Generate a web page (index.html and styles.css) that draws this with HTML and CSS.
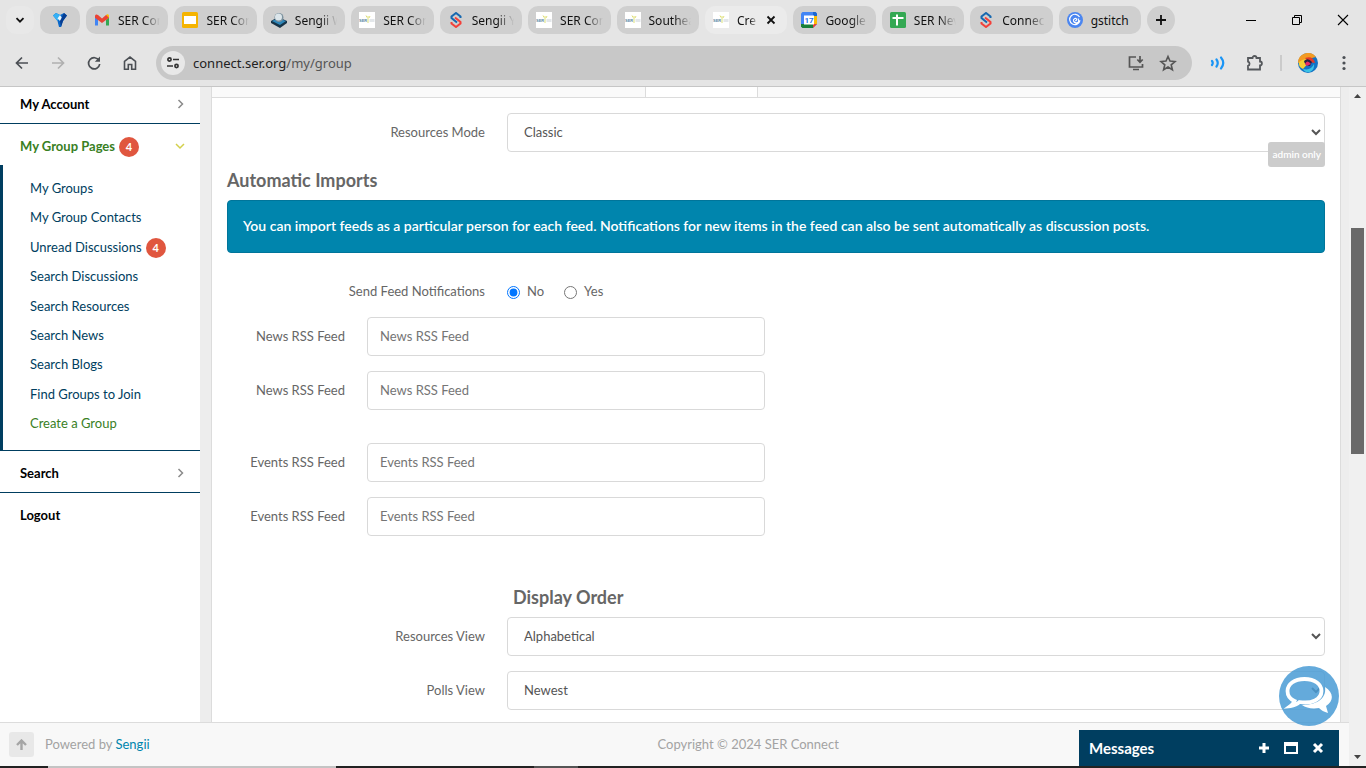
FILE: index.html
```html
<!DOCTYPE html>
<html lang="en">
<head>
<meta charset="utf-8">
<title>Create a Group</title>
<link rel="stylesheet" href="styles.css">
</head>
<body>
<svg class="defs" aria-hidden="true">
  <symbol id="ser" viewBox="0 0 16 16"><rect width="16" height="16" fill="#fff"/><text x="0" y="10" font-family="Liberation Sans, sans-serif" font-weight="700" font-size="4" fill="#5c87a3">SER</text><path d="M9 4v7M7 3.500l1 2M11 4l-1 2" stroke="#dfe07a" stroke-width="1"/><path d="M10.500 8.500h5" stroke="#e3e7ea" stroke-width="3"/></symbol>
  <symbol id="sengii" viewBox="0 0 16 16"><path d="M12.500 6V4.500L8 1 3.500 4.500V6L9 10.500" fill="none" stroke="#1668b0" stroke-width="2"/><path d="M7 5.500 12.500 10v1.500L8 15l-4.500-3.500V10" fill="none" stroke="#f3403a" stroke-width="2"/></symbol>
</svg>
<header class="browser">
  <div class="tabstrip">
    <button class="tab-search" aria-label="Search tabs"><svg width="10" height="10" viewBox="0 0 10 10"><path d="M1.500 3.200 5 6.700 8.500 3.200" fill="none" stroke="#111" stroke-width="1.800"/></svg></button>
    <div class="tabs">
      <button class="tab pinned" aria-label="Pinned tab"><svg width="16" height="16" viewBox="0 0 16 16"><path d="M1 3.500 4 1l4 2 4-2 3 2.500-4 5.500-2 6H7L5.500 9z" fill="#0a67c8"/><path d="M1 3.500 4 1l4 2-2.500 6z" fill="#35b1f5"/><path d="M8 3 5.500 6.500 8 9l2.500-2.500z" fill="#e8f8ff"/><path d="M11 9 15 3.500 12 1 8 9l1 6z" fill="#073d91"/></svg></button>
      <button class="tab"><svg width="16" height="16" viewBox="0 0 16 16"><path d="M1 4v9.500h3V7z" fill="#4285f4"/><path d="M12 7v6.500h3V4z" fill="#34a853"/><path d="M12 4.500V8l3-2.300V4c0-1.600-1.700-2.200-3-1z" fill="#fbbc04"/><path d="M1 5.700 8 11l7-5.300-3-2.700L8 6.500 4 3C2.700 2 1 2.500 1 4z" fill="#ea4335"/></svg><span>SER Con</span></button>
      <button class="tab"><svg width="16" height="16" viewBox="0 0 16 16"><rect width="16" height="16" rx="1.500" fill="#f5b400"/><rect x="2" y="4" width="12" height="8" fill="#fff"/></svg><span>SER Con</span></button>
      <button class="tab"><svg width="16" height="16" viewBox="0 0 16 16"><path d="M0 9 7 5l9 4v2l-7 5-9-5z" fill="#173448"/><path d="M1 9l6-3 8 3-6 4z" fill="#2e86b8"/><circle cx="8" cy="5.500" r="4.500" fill="#7d929e"/><circle cx="7.500" cy="5" r="3.500" fill="#dce6eb"/></svg><span>Sengii W</span></button>
      <button class="tab"><svg width="16" height="16"><use href="#ser"/></svg><span>SER Con</span></button>
      <button class="tab"><svg width="16" height="16"><use href="#sengii"/></svg><span>Sengii Y</span></button>
      <button class="tab"><svg width="16" height="16"><use href="#ser"/></svg><span>SER Con</span></button>
      <button class="tab"><svg width="16" height="16"><use href="#ser"/></svg><span>Southea</span></button>
      <button class="tab active"><svg width="16" height="16"><use href="#ser"/></svg><span>Cre</span><svg class="close" width="10" height="10" viewBox="0 0 10 10"><path d="m1.500 1.500 7 7m0-7-7 7" stroke="#111" stroke-width="1.800"/></svg></button>
      <button class="tab"><svg width="16" height="16" viewBox="0 0 16 16"><path d="M1.500 0h13L16 1.500V12l-4 4H1.500L0 14.500v-13z" fill="#4285f4"/><path d="M12 4h4v8h-4z" fill="#fbbc04"/><path d="M4 12h8v4H1.500L0 14.500V12z" fill="#188038"/><path d="M12 12h4l-4 4z" fill="#ea4335"/><path d="M12 0h2.500L16 1.500V4h-4z" fill="#1967d2"/><rect x="3" y="3.500" width="10" height="9" fill="#fff"/><text x="8" y="11.300" text-anchor="middle" font-family="Roboto, sans-serif" font-weight="700" font-size="8" fill="#1a73e8">17</text></svg><span>Google</span></button>
      <button class="tab"><svg width="16" height="16" viewBox="0 0 16 16"><rect width="16" height="16" rx="1.500" fill="#34a853"/><path d="M2.500 6h11M7 2.500v11" stroke="#fff" stroke-width="2"/></svg><span>SER Nev</span></button>
      <button class="tab"><svg width="16" height="16"><use href="#sengii"/></svg><span>Connec</span></button>
      <button class="tab"><svg width="16" height="16" viewBox="0 0 16 16"><circle cx="8" cy="8" r="8" fill="#4b86f0"/><path d="M12.500 5A5.200 5.200 0 1 0 13 8.500c-.8 2.500-5.500 3.500-6.500.5C6 7 8.500 5.500 9.500 7c.5 1-.5 2-1.500 1.700M11 6.500c1.500 2 .5 5-2.500 5.500" fill="none" stroke="#fff" stroke-width="1.200"/></svg><span class="full">gstitch</span></button>
      <button class="newtab" aria-label="New tab"><svg width="12" height="12" viewBox="0 0 12 12"><path d="M6 1v10M1 6h10" stroke="#111" stroke-width="1.800"/></svg></button>
    </div>
    <div class="window-buttons">
      <button aria-label="Minimise"><svg width="12" height="12" viewBox="0 0 12 12"><path d="M1 6.500h10" stroke="#000"/></svg></button>
      <button aria-label="Restore"><svg width="12" height="12" viewBox="0 0 12 12"><path d="M1.500 3.500h7v7h-7zM3.500 3.500v-2h7v7h-2" fill="none" stroke="#000"/></svg></button>
      <button aria-label="Close"><svg width="12" height="12" viewBox="0 0 12 12"><path d="m1 1 10 10M11 1 1 11" stroke="#000" stroke-width="1.100"/></svg></button>
    </div>
  </div>
  <div class="toolbar">
    <div class="nav">
      <button aria-label="Back"><svg width="16" height="16" viewBox="0 0 16 16"><path d="M14 8H3M8 2.500 2.500 8 8 13.500" fill="none" stroke="#4b4f54" stroke-width="1.700"/></svg></button>
      <button aria-label="Forward"><svg width="16" height="16" viewBox="0 0 16 16"><path d="M2 8h11M8 2.500 13.500 8 8 13.500" fill="none" stroke="#b0b0b0" stroke-width="1.700"/></svg></button>
      <button aria-label="Reload"><svg width="16" height="16" viewBox="0 0 16 16"><path d="M13 5.500A5.600 5.600 0 1 0 13.700 9" fill="none" stroke="#4b4f54" stroke-width="1.700"/><path d="M14 1.500v5.300H8.800z" fill="#4b4f54"/></svg></button>
      <button aria-label="Home"><svg width="16" height="16" viewBox="0 0 16 16"><path d="M2.500 6.300 8 2l5.500 4.300v8H9.700V9.500H6.300v4.800H2.500z" fill="none" stroke="#4b4f54" stroke-width="1.600"/></svg></button>
    </div>
    <div class="address">
      <button class="site" aria-label="Site information"><svg width="14" height="14" viewBox="0 0 14 14"><g fill="none" stroke="#333" stroke-width="1.700"><circle cx="3.500" cy="3.500" r="1.600"/><path d="M7 3.500h6M1 10h6"/><circle cx="10.500" cy="10" r="1.600"/></g></svg></button>
      <span class="url">connect.ser.org<span>/my/group</span></span>
      <button aria-label="Install"><svg width="18" height="18" viewBox="0 0 18 18"><path d="M9 3H2.500v10h13v-3M13 2v6m-2.700-2.500L13 8.200l2.700-2.700M6 15.500h6" fill="none" stroke="#555" stroke-width="1.700"/></svg></button>
      <button aria-label="Bookmark"><svg width="18" height="18" viewBox="0 0 18 18"><path d="m9 2.500 2 4.500 5 .5-3.800 3.300 1.200 4.900L9 13l-4.400 2.700 1.200-4.900L2 7.500 7 7z" fill="none" stroke="#555" stroke-width="1.600"/></svg></button>
    </div>
    <div class="extensions">
      <button aria-label="Read aloud"><svg width="16" height="16" viewBox="0 0 16 16"><path d="M2 6q1.500 2 0 4M6.500 4.500q2.500 3.500 0 7M11 2.500q4.500 5.500 0 11" fill="none" stroke="#1b95f5" stroke-width="2.200" stroke-linecap="round"/></svg></button>
      <button aria-label="Extensions"><svg width="18" height="18" viewBox="0 0 18 18"><path d="M3 4h4.500a2 2 0 0 1 4 0H15v3.500a1.900 1.900 0 0 1 0 3.800V15.500H3v-3.700a2.200 2.200 0 0 0 0-4.200z" fill="none" stroke="#55585c" stroke-width="1.800"/></svg></button>
      <i class="divider"></i>
      <button aria-label="Profile"><svg width="20" height="20" viewBox="0 0 20 20"><circle cx="10" cy="10" r="10" fill="#1272c4"/><path d="M0 10A10 10 0 0 1 18 4L10 6z" fill="#f39a21"/><path d="M1 9q6-5 11-1l-7 8Q0 14 1 9" fill="#f3cf35"/><path d="M7 5q8-3 10 5l-6-1z" fill="#e23a28"/><path d="M6 8q4-4 8 1l-2 4q-5 0-6-5" fill="#222348"/><path d="M7 11q2-5 6 0l-4 2z" fill="#e62a69"/><path d="M5 16q8 2 11-5 1 5-4 8-5 1-7-3" fill="#3ac2e5"/></svg></button>
      <button aria-label="Menu"><svg width="16" height="16" viewBox="0 0 16 16" fill="#4b4f54"><circle cx="8" cy="2.500" r="1.600"/><circle cx="8" cy="8" r="1.600"/><circle cx="8" cy="13.500" r="1.600"/></svg></button>
    </div>
  </div>
</header>

<div class="viewport">
  <div class="page">
    <div class="columns">
      <nav class="sidebar">
        <a class="item first" href="#">My Account<svg width="8" height="12" viewBox="0 0 8 12"><path d="m1.500 2 4 4-4 4" fill="none" stroke="#8a8a8a" stroke-width="1.500"/></svg></a>
        <a class="item open" href="#">My Group Pages<span class="count">4</span><svg width="10" height="12" viewBox="0 0 10 12"><path d="m1 4 4 4 4-4" fill="none" stroke="#d3d04b" stroke-width="1.500"/></svg></a>
        <div class="sub">
          <a href="#">My Groups</a>
          <a href="#">My Group Contacts</a>
          <a href="#">Unread Discussions<span class="count">4</span></a>
          <a href="#">Search Discussions</a>
          <a href="#">Search Resources</a>
          <a href="#">Search News</a>
          <a href="#">Search Blogs</a>
          <a href="#">Find Groups to Join</a>
          <a class="current" href="#">Create a Group</a>
        </div>
        <a class="item" href="#">Search<svg width="8" height="12" viewBox="0 0 8 12"><path d="m1.500 2 4 4-4 4" fill="none" stroke="#8a8a8a" stroke-width="1.500"/></svg></a>
        <a class="item last" href="#">Logout</a>
      </nav>
      <main class="content">
        <div class="section-tabs"><div class="section-active"></div></div>
        <form class="panel">
          <div class="row">
            <label for="mode">Resources Mode</label>
            <div class="control"><select id="mode"><option>Classic</option></select><span class="admin">admin only</span></div>
          </div>
          <h2>Automatic Imports</h2>
          <p class="alert">You can import feeds as a particular person for each feed. Notifications for new items in the feed can also be sent automatically as discussion posts.</p>
          <div class="row notify" role="radiogroup" aria-labelledby="notify">
            <span class="legend" id="notify">Send Feed Notifications</span>
            <div class="radios">
              <label><input type="radio" name="notify" checked>No</label>
              <label><input type="radio" name="notify">Yes</label>
            </div>
          </div>
          <div class="feeds">
            <div class="row"><label for="news1">News RSS Feed</label><input id="news1" type="text" placeholder="News RSS Feed"></div>
            <div class="row"><label for="news2">News RSS Feed</label><input id="news2" type="text" placeholder="News RSS Feed"></div>
          </div>
          <div class="feeds">
            <div class="row"><label for="events1">Events RSS Feed</label><input id="events1" type="text" placeholder="Events RSS Feed"></div>
            <div class="row"><label for="events2">Events RSS Feed</label><input id="events2" type="text" placeholder="Events RSS Feed"></div>
          </div>
          <h2 class="order">Display Order</h2>
          <div class="row"><label for="resources">Resources View</label><div class="control"><select id="resources"><option>Alphabetical</option></select></div></div>
          <div class="row"><label for="polls">Polls View</label><div class="control"><select id="polls"><option>Newest</option></select></div></div>
        </form>
      </main>
    </div>
    <footer class="footer">
      <button class="totop" aria-label="Back to top"><svg width="11" height="11" viewBox="0 0 11 11"><path d="M5.500 11V2M1 6l4.500-4.500L10 6" fill="none" stroke="#a5a5a5" stroke-width="2.400"/></svg></button>
      <span class="powered">Powered by <a href="#">Sengii</a></span>
      <span class="copyright">Copyright © 2024 SER Connect</span>
    </footer>
    <button class="chat" aria-label="Chat"><svg width="60" height="60" viewBox="0 0 60 60"><path d="M46 21c9 6 9 14 1 19l2 7c-4-1-7-3-9-5-7 1-13 0-17-3 12 0 25-5 23-18z" fill="#fff"/><path d="M25.500 13C15 13 8.500 18.500 8.500 25c0 4.500 2.500 8 7 10-1 2-2 3.500-4 5 4-.5 7-2 9-4 12 2 22-2.500 22-11 0-6.500-6.500-12-17-12z" fill="none" stroke="#fff" stroke-width="3.800"/></svg></button>
    <section class="messages">
      <strong>Messages</strong>
      <button aria-label="New message"><svg width="12" height="12" viewBox="0 0 12 12"><path d="M6 1v10M1 6h10" stroke="#fff" stroke-width="3"/></svg></button>
      <button aria-label="Open window"><svg width="14" height="12" viewBox="0 0 14 12"><path d="M1 1h12v10H1zM1 3h12" fill="none" stroke="#fff" stroke-width="2"/></svg></button>
      <button aria-label="Close messages"><svg width="12" height="12" viewBox="0 0 12 12"><path d="m2 2 8 8m0-8-8 8" stroke="#fff" stroke-width="3"/></svg></button>
    </section>
  </div>
  <div class="scrollbar">
    <svg width="9" height="6" viewBox="0 0 9 6"><path d="M1 5 4.500 1 8 5z" fill="#444"/></svg>
    <div class="track"><div class="thumb"></div></div>
    <svg width="9" height="6" viewBox="0 0 9 6"><path d="m1 1 3.500 4L8 1z" fill="#444"/></svg>
  </div>
</div>
<div class="taskbar"></div>
</body>
</html>
```
FILE: styles.css
```css
* { box-sizing: border-box; }
body {
  margin: 0;
  height: 100vh;
  display: flex;
  flex-direction: column;
  overflow: hidden;
  font: 13px/18px Lato, sans-serif;
  color: #666;
}
button {
  border: 0;
  padding: 0;
  background: none;
  color: inherit;
  font: inherit;
  display: flex;
  align-items: center;
  justify-content: center;
  flex: none;
}
a { color: #0085ad; text-decoration: none; }
svg { flex: none; }
.defs { position: absolute; width: 0; height: 0; }

.browser {
  flex: none;
  background: #e5e5e5;
  border-bottom: 1px solid #c6c6c6;
  font-family: "Noto Sans", "Open Sans", sans-serif;
  color: #111;
}
.tabstrip { display: flex; height: 40px; align-items: center; padding-left: 6px; }
.tab-search { width: 28px; height: 28px; margin-right: 6px; border-radius: 10px; background: #e8e8e8; }
.tabs { flex: 0 1 1135px; display: flex; gap: 6px; min-width: 0; }
.tab {
  flex: 1 1 0;
  min-width: 0;
  height: 28px;
  border-radius: 10px;
  background: #cfcfcf;
  padding: 0 8px;
  gap: 8px;
  justify-content: flex-start;
  font-size: 12px;
}
.tab span {
  flex: 1;
  min-width: 0;
  padding-top: 1px;
  overflow: hidden;
  white-space: nowrap;
  text-align: left;
  mask-image: linear-gradient(to right, #000 60%, transparent);
}
.tab .full { mask-image: none; }
.tab.pinned { flex: none; width: 40px; justify-content: center; }
.tab.active { background: #ebebeb; }
.tab .close { margin-right: 3px; }
.newtab { width: 28px; height: 28px; border-radius: 14px; background: #cfcfcf; }
.window-buttons { display: flex; margin-left: auto; }
.window-buttons button { width: 46px; height: 40px; }
.toolbar { display: flex; align-items: center; height: 46px; padding-bottom: 1px; }
.nav { display: flex; padding-left: 4px; margin-right: 8px; }
.nav button { width: 36px; height: 34px; }
.address {
  flex: 1;
  display: flex;
  align-items: center;
  height: 34px;
  border-radius: 17px;
  background: #c8c8c8;
  padding: 0 8px 0 5px;
}
.address button { width: 32px; height: 32px; }
.address .site { width: 24px; height: 24px; border-radius: 12px; background: #e8e8e8; }
.url { flex: 1; padding-left: 8px; font-size: 13px; color: #222; }
.url span { color: #555; }
.extensions { display: flex; align-items: center; padding: 0 4px 0 8px; }
.extensions button { width: 36px; height: 34px; }
.divider { width: 2px; height: 16px; margin: 0 8px; background: #cbcbcb; }

.viewport { flex: 1; min-height: 0; display: flex; }
.page { flex: 1; min-width: 0; position: relative; display: flex; flex-direction: column; }
.columns { flex: 1; min-height: 0; display: flex; overflow: hidden; background: #ededed; }
.sidebar { width: 200px; flex: none; background: #fff; }
.item {
  display: flex;
  align-items: center;
  padding: 13px 15px 10px 20px;
  border-bottom: 1px solid #003e60;
  font-weight: 700;
  color: #000;
}
.item svg { margin-left: auto; }
.item.first { padding-top: 8px; }
.item.open { border-bottom: 0; color: #39801f; }
.item.last { border-bottom: 0; }
.count {
  width: 20px;
  height: 20px;
  margin: 0 0 -2px 4px;
  border-radius: 10px;
  background: #e0563f;
  color: #fff;
  font-size: 11px;
  font-weight: 700;
  line-height: 20px;
  text-align: center;
}
.sub {
  min-height: 286px;
  padding: 9px 0 12px 27px;
  border-left: 3px solid #003e60;
  border-bottom: 1px solid #003e60;
  display: flex;
  flex-direction: column;
  justify-content: space-between;
  line-height: 29px;
}
.sub a { display: flex; align-items: center; color: #003e60; }
.sub .current { color: #39801f; }

.content { flex: 1; min-width: 0; padding: 0 8px 0 11px; }
.section-tabs {
  height: 11px;
  display: flex;
  background: #fafafa;
  border: 1px solid #dcdcdc;
  border-top: 0;
}
.section-active {
  width: 10%;
  margin-left: 38.4%;
  background: #fff;
  border: solid #dcdcdc;
  border-width: 0 1px;
}
.panel { background: #fff; border: solid #dcdcdc; border-width: 0 1px; padding: 15px 15px 40px; }
.row { display: flex; align-items: center; margin-bottom: 15px; }
.row > label { padding-bottom: 1px; }
.row > label, .legend { width: 258px; flex: none; margin-right: 22px; text-align: right; }
.control { flex: 1; position: relative; display: flex; }
select, input[type="text"] {
  flex: 1;
  width: 100%;
  min-width: 0;
  height: 39px;
  padding: 0 12px 1px;
  border: 1px solid #d9d9d9;
  border-radius: 4px;
  background: #fff;
  color: #555;
  font: inherit;
}
select { padding-right: 0; }
input::placeholder { color: #757575; }
.admin {
  position: absolute;
  right: 0;
  bottom: -15px;
  padding: 4px;
  border-radius: 3px;
  background: #ccc;
  color: #fff;
  font-size: 10px;
  line-height: 17px;
  font-weight: 600;
}
h2 { margin: 18px 0 10px; font-size: 18px; line-height: 20px; color: #666; }
.alert {
  margin: 0;
  padding: 15px 15px 17px;
  border: 1px solid #00759a;
  border-radius: 4px;
  background: #0085ad;
  color: #fff;
  font-size: 14px;
  line-height: 19px;
  font-weight: 600;
}
.notify { margin: 29px 0 17px; }
.radios { display: flex; gap: 20px; }
.radios label { display: flex; align-items: center; }
.radios input { width: 13px; height: 13px; margin: 2px 7px 0 0; accent-color: #0075ff; }
.feeds { width: 49%; margin-bottom: 33px; }
.feeds .row > label { width: 118px; }
.order { margin: 51px 0 10px 286px; }

.footer {
  flex: none;
  height: 44px;
  display: grid;
  grid-template-columns: 25px 11fr auto 9fr;
  align-items: center;
  padding: 0 0 0 9px;
  background: #f8f8f8;
  border-top: 1px solid #dcdcdc;
  color: #a3a3a3;
}
.totop { width: 25px; height: 25px; border-radius: 3px; background: #e8e8e8; }
.powered { padding-left: 11px; }
.powered, .copyright { padding-bottom: 1px; }
.chat {
  position: absolute;
  right: 10px;
  bottom: 40px;
  width: 60px;
  height: 60px;
  border-radius: 30px;
  background: rgba(73, 155, 213, 0.85);
}
.messages {
  position: absolute;
  right: 10px;
  bottom: 0;
  width: 260px;
  height: 36px;
  display: flex;
  align-items: center;
  padding: 0 8px 0 10px;
  background: #003e60;
  color: #fff;
}
.messages strong { flex: 1; font-size: 15px; }
.messages button { width: 27px; height: 24px; }
.scrollbar {
  width: 17px;
  flex: none;
  display: flex;
  flex-direction: column;
  align-items: center;
  padding: 6px 0;
  background: #f0f0f0;
}
.track { flex: 1; width: 13px; margin: 5px 0; }
.thumb { height: 35%; margin-top: 124px; background: #696969; }
.taskbar {
  flex: none;
  height: 2px;
  background: linear-gradient(to right, #222 48px, #c4c4c4 48px, #c4c4c4 336px, #222 336px, #222 534px, #555 534px, #555 578px, #222 578px);
}
```
